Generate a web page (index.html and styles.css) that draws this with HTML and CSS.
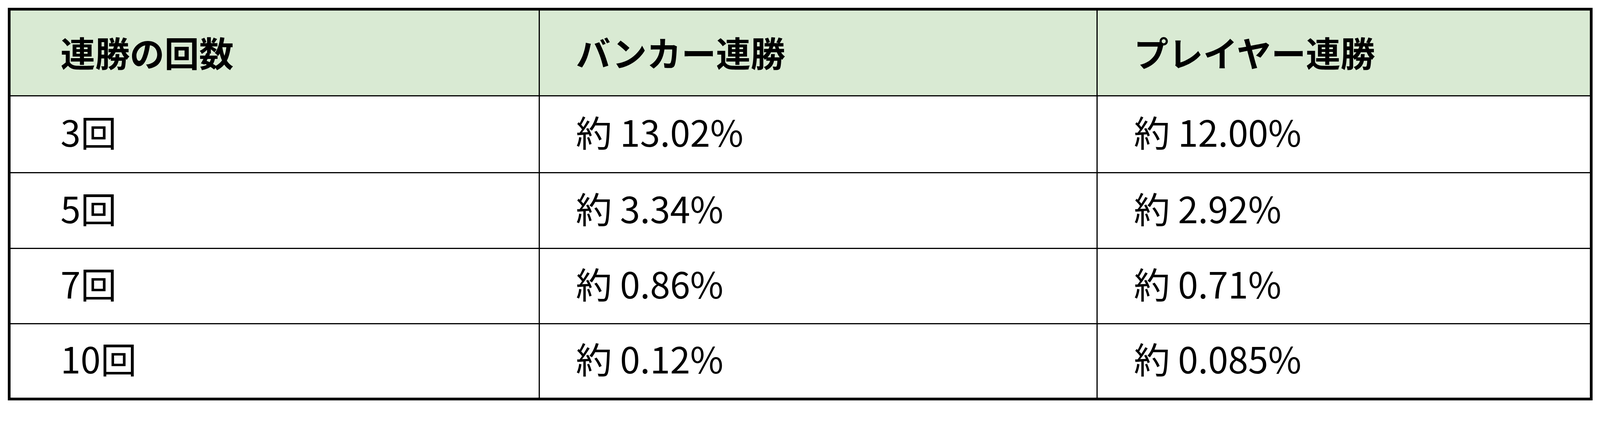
FILE: index.html
```html
<!DOCTYPE html>
<html lang="ja">
<head>
<meta charset="utf-8">
<title>連勝の回数</title>
<link rel="stylesheet" href="styles.css">
</head>
<body>
<div class="odds" role="table">
  <div class="cell head c1" role="columnheader">連勝の回数</div>
  <div class="cell head c2" role="columnheader">バンカー連勝</div>
  <div class="cell head c3" role="columnheader">プレイヤー連勝</div>

  <div class="cell c1" role="cell">3回</div>
  <div class="cell c2" role="cell">約 13.02%</div>
  <div class="cell c3" role="cell">約 12.00%</div>

  <div class="cell c1" role="cell">5回</div>
  <div class="cell c2" role="cell">約 3.34%</div>
  <div class="cell c3" role="cell">約 2.92%</div>

  <div class="cell c1" role="cell">7回</div>
  <div class="cell c2" role="cell">約 0.86%</div>
  <div class="cell c3" role="cell">約 0.71%</div>

  <div class="cell c1 last" role="cell">10回</div>
  <div class="cell c2 last" role="cell">約 0.12%</div>
  <div class="cell c3 last" role="cell">約 0.085%</div>
</div>
</body>
</html>
```
FILE: styles.css
```css
:root {
  --u: calc(100vw / 4344);
}
html, body {
  margin: 0;
  padding: 0;
  background: #ffffff;
  overflow: hidden;
}
body {
  padding: calc(21 * var(--u)) 0 0 calc(21 * var(--u));
  font-family: "Noto Sans CJK JP", "Noto Sans", sans-serif;
  color: #000000;
}
.odds {
  display: grid;
  grid-template-columns: calc(1437 * var(--u)) calc(1515 * var(--u)) calc(1336 * var(--u));
  grid-template-rows: calc(234 * var(--u)) calc(208 * var(--u)) calc(206 * var(--u)) calc(205 * var(--u)) calc(199 * var(--u));
  width: calc(4288 * var(--u));
  border: calc(8 * var(--u)) solid #000000;
}
.cell {
  display: flex;
  align-items: center;
  box-sizing: border-box;
  font-size: calc(98 * var(--u));
  line-height: 1.2;
  font-weight: 400;
  white-space: nowrap;
  border-right: calc(4 * var(--u)) solid #000000;
  border-bottom: calc(4 * var(--u)) solid #000000;
  padding-left: calc(98 * var(--u));
  padding-bottom: calc(15 * var(--u));
}
.head {
  font-size: calc(94 * var(--u));
  font-weight: 700;
  background: #d9ead3;
  padding-bottom: calc(6 * var(--u));
}
.c1 {
  padding-left: calc(136 * var(--u));
}
.c3 {
  border-right: none;
}
.last {
  border-bottom: none;
}
```
